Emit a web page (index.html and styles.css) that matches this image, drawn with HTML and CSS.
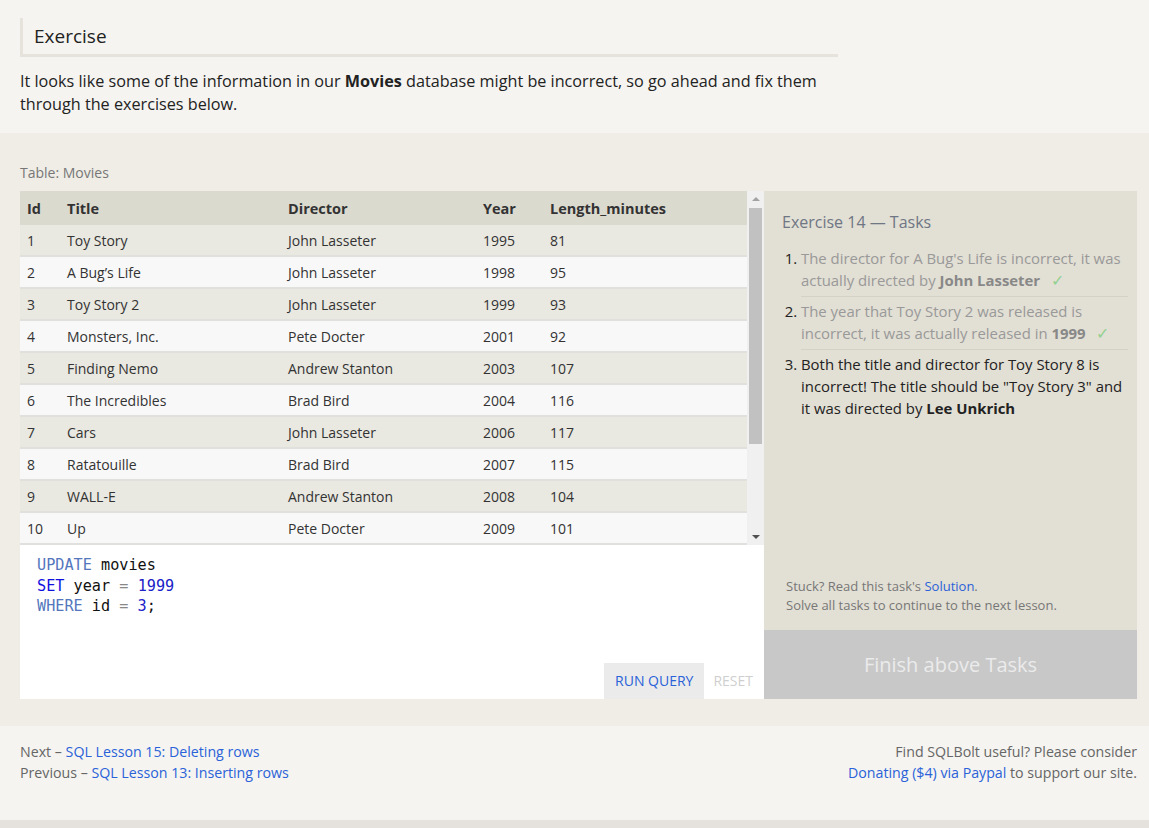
FILE: index.html
```html
<!DOCTYPE html>
<html>
<head>
<meta charset="utf-8">
<link rel="stylesheet" href="styles.css">
</head>
<body>
<section class="intro">
  <div class="intro-inner">
    <h3 class="ex-heading">Exercise</h3>
    <p class="intro-text">It looks like some of the information in our <strong>Movies</strong> database might be incorrect, so go ahead and fix them through the exercises below.</p>
  </div>
</section>

<section class="exercise">
  <div class="table-label">Table: Movies</div>
  <div class="workspace">
    <div class="left">
      <div class="table-wrap">
        <table class="movies">
          <colgroup>
            <col class="c-id"><col class="c-title"><col class="c-dir"><col class="c-year"><col class="c-len">
          </colgroup>
          <thead>
            <tr><th>Id</th><th>Title</th><th>Director</th><th>Year</th><th>Length_minutes</th></tr>
          </thead>
          <tbody>
            <tr><td>1</td><td>Toy Story</td><td>John Lasseter</td><td>1995</td><td>81</td></tr>
            <tr><td>2</td><td>A Bug’s Life</td><td>John Lasseter</td><td>1998</td><td>95</td></tr>
            <tr><td>3</td><td>Toy Story 2</td><td>John Lasseter</td><td>1999</td><td>93</td></tr>
            <tr><td>4</td><td>Monsters, Inc.</td><td>Pete Docter</td><td>2001</td><td>92</td></tr>
            <tr><td>5</td><td>Finding Nemo</td><td>Andrew Stanton</td><td>2003</td><td>107</td></tr>
            <tr><td>6</td><td>The Incredibles</td><td>Brad Bird</td><td>2004</td><td>116</td></tr>
            <tr><td>7</td><td>Cars</td><td>John Lasseter</td><td>2006</td><td>117</td></tr>
            <tr><td>8</td><td>Ratatouille</td><td>Brad Bird</td><td>2007</td><td>115</td></tr>
            <tr><td>9</td><td>WALL-E</td><td>Andrew Stanton</td><td>2008</td><td>104</td></tr>
            <tr class="last"><td>10</td><td>Up</td><td>Pete Docter</td><td>2009</td><td>101</td></tr>
          </tbody>
        </table>
        <div class="scrollbar">
          <div class="arrow up"></div>
          <div class="thumb"></div>
          <div class="track"></div>
          <div class="arrow down"></div>
        </div>
      </div>
      <div class="editor">
        <pre class="code"><span class="kw">UPDATE</span> movies
<span class="kw2">SET</span> year <span class="op">=</span> <span class="num">1999</span>
<span class="kw">WHERE</span> id <span class="op">=</span> <span class="num">3</span>;</pre>
        <div class="buttons">
          <span class="btn run">RUN QUERY</span>
          <span class="btn reset">RESET</span>
        </div>
      </div>
    </div>
    <div class="tasks">
      <div class="tasks-body">
        <div class="tasks-title">Exercise 14 — Tasks</div>
        <ol class="task-list">
          <li class="done">The director for A Bug's Life is incorrect, it was actually directed by <b>John Lasseter</b> <span class="check">✓</span></li>
          <li class="done">The year that Toy Story 2 was released is incorrect, it was actually released in <b>1999</b> <span class="check">✓</span></li>
          <li>Both the title and director for Toy Story 8 is incorrect! The title should be "Toy Story 3" and it was directed by <b>Lee Unkrich</b></li>
        </ol>
        <div class="stuck">
          <div>Stuck? Read this task's <a href="#">Solution</a>.</div>
          <div>Solve all tasks to continue to the next lesson.</div>
        </div>
      </div>
      <div class="finish">Finish above Tasks</div>
    </div>
  </div>
</section>

<footer class="footer">
  <div class="nav">
    <div>Next – <a href="#">SQL Lesson 15: Deleting rows</a></div>
    <div>Previous – <a href="#">SQL Lesson 13: Inserting rows</a></div>
  </div>
  <div class="donate">
    <div>Find SQLBolt useful? Please consider</div>
    <div><a href="#">Donating ($4) via Paypal</a> to support our site.</div>
  </div>
</footer>
<div class="bottom-bar"></div>
</body>
</html>
```
FILE: styles.css
```css
html, body {
  margin: 0;
  padding: 0;
}
body {
  background: #f5f4f0;
  font-family: "Open Sans", "Noto Sans", sans-serif;
  color: #222;
}
a {
  color: #2a62d9;
  text-decoration: none;
}

.intro {
  background: #f5f4f0;
  padding: 18px 20px 17px 20px;
}
.intro-inner {
  width: 818px;
}
.ex-heading {
  margin: 0;
  font-weight: normal;
  font-size: 19px;
  color: #222;
  height: 36px;
  line-height: 36px;
  padding-left: 11px;
  border-left: 3px solid #e5e3dc;
  border-bottom: 3px solid #e5e3dc;
}
.intro-text {
  margin: 13px 0 0 0;
  font-size: 16.2px;
  line-height: 23px;
}
.intro-text strong {
  font-weight: bold;
}

.exercise {
  background: #efede6;
  padding: 30px 12px 27px 20px;
}
.table-label {
  font-size: 14px;
  color: #777;
  line-height: 20px;
  margin-bottom: 8px;
}
.workspace {
  display: flex;
  height: 508px;
}
.left {
  width: 744px;
  display: flex;
  flex-direction: column;
}
.table-wrap {
  display: flex;
  height: 354px;
  background: #f8f8f8;
}
.movies {
  width: 727px;
  border-collapse: collapse;
  font-size: 14px;
  color: #333;
  table-layout: fixed;
}
.c-id { width: 40px; }
.c-title { width: 221px; }
.c-dir { width: 195px; }
.c-year { width: 67px; }
.c-len { width: 204px; }
.movies th {
  text-align: left;
  font-weight: bold;
  background: #dbdacf;
  height: 34px;
  padding: 0 0 0 7px;
  font-size: 14.5px;
  color: #333;
}
.movies td {
  height: 30px;
  padding: 0 0 0 7px;
  border-bottom: 2px solid #e0e0dc;
}
.movies tbody tr:nth-child(odd) td {
  background: #e9e8e1;
}
.movies tbody tr:nth-child(even) td {
  background: #f8f8f8;
}
.scrollbar {
  width: 17px;
  background: #f0f0f0;
  display: flex;
  flex-direction: column;
  align-items: center;
}
.arrow {
  height: 17px;
  width: 17px;
  position: relative;
}
.arrow.up::after {
  content: "";
  position: absolute;
  left: 5px;
  top: 6px;
  border-left: 4px solid transparent;
  border-right: 4px solid transparent;
  border-bottom: 4px solid #a3a3a3;
}
.arrow.down::after {
  content: "";
  position: absolute;
  left: 5px;
  top: 7px;
  border-left: 4px solid transparent;
  border-right: 4px solid transparent;
  border-top: 4px solid #505050;
}
.thumb {
  width: 13px;
  height: 236px;
  background: #c1c1c1;
}
.track {
  flex: 1;
}

.editor {
  flex: 1;
  background: #fff;
  display: flex;
  flex-direction: column;
  justify-content: space-between;
}
.code {
  margin: 0;
  padding: 10px 17px;
  font-family: "DejaVu Sans Mono", "Liberation Mono", monospace;
  font-size: 15.2px;
  line-height: 20.5px;
  color: #111;
}
.kw { color: #5476bd; }
.kw2 { color: #1010e0; }
.num { color: #1a22c8; }
.op { color: #888; }
.buttons {
  display: flex;
  justify-content: flex-end;
}
.btn {
  font-size: 14px;
  height: 36px;
  line-height: 36px;
  padding: 0 11px;
}
.btn.run {
  background: #ebebeb;
  color: #2a62d9;
}
.btn.reset {
  color: #cfcfcf;
  padding: 0 11px 0 9px;
}

.tasks {
  width: 373px;
  background: #e2dfd4;
  display: flex;
  flex-direction: column;
}
.tasks-body {
  flex: 1;
  padding: 20px 9px 15px 18px;
  display: flex;
  flex-direction: column;
}
.tasks-title {
  font-size: 16px;
  color: #6f7684;
  line-height: 22px;
}
.task-list {
  margin: 11px 0 0 0;
  padding-left: 19px;
  font-size: 14.9px;
  line-height: 22px;
  color: #222;
}
.task-list li {
  padding: 3px 0 5px 0;
  border-bottom: 1px solid #d4d1c6;
}
.task-list li:last-child {
  border-bottom: none;
}
.task-list li.done {
  color: #999;
}
.task-list li::marker {
  color: #222;
}
.task-list li.done b {
  color: #888;
}
.task-list li b {
  color: #222;
}
.check {
  color: #92d192;
  font-size: 16px;
  margin-left: 7px;
}
.stuck {
  margin-top: auto;
  padding-left: 4px;
  font-size: 13px;
  line-height: 19px;
  color: #777;
}
.finish {
  height: 69px;
  background: #c8c8c8;
  color: #ebebeb;
  font-size: 20px;
  display: flex;
  align-items: center;
  justify-content: center;
}

.footer {
  background: #f5f4f0;
  display: flex;
  justify-content: space-between;
  padding: 15px 12px 37px 20px;
  font-size: 14.2px;
  line-height: 21px;
  color: #666;
}
.donate {
  text-align: right;
}
.bottom-bar {
  height: 8px;
  background: #e5e2dd;
}
```
